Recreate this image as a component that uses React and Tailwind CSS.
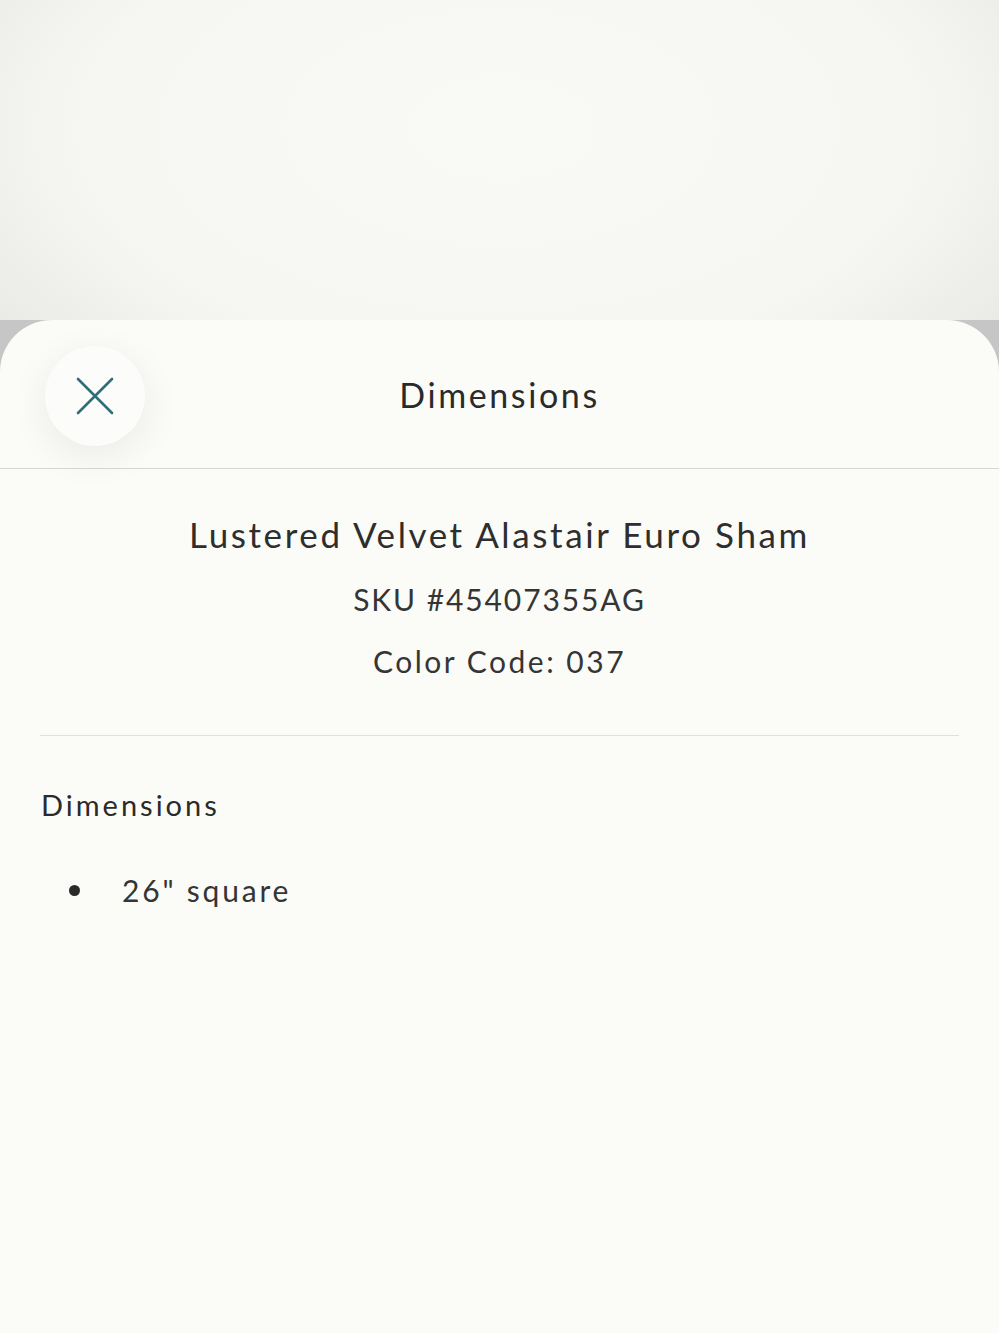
export default function App() {
  const font = { fontFamily: '"Lato", "Noto Sans", sans-serif' }

  return (
    <div className="w-[999px] h-[1333px] flex flex-col overflow-hidden" style={font}>
      {/* page behind the sheet */}
      <div className="h-[320px] bg-[radial-gradient(ellipse_70%_120%_at_50%_40%,#f9faf5_0%,#f6f7f2_60%,#e4e5e1_100%)]" />

      <div className="flex-1 bg-[#c6c6c6]">
        <div className="h-full bg-[#fbfcf8] rounded-t-[52px] flex flex-col">
          {/* header */}
          <div className="h-[149px] flex items-center relative border-b border-[#d6d6d2]">
            <button className="absolute left-[45px] top-[26px] w-[100px] h-[100px] rounded-full bg-[#fcfcfa] shadow-[0_10px_40px_rgba(0,0,0,0.07)] flex items-center justify-center">
              <svg width="40" height="40" viewBox="0 0 40 40" fill="none">
                <path d="M3 3L37 37M37 3L3 37" stroke="#2f6e78" strokeWidth="2.6" strokeLinecap="round" />
              </svg>
            </button>
            <div className="w-full text-center text-[34px] text-[#2a2a2a] tracking-[2.6px]">Dimensions</div>
          </div>

          {/* product */}
          <div className="mx-[40px] pt-[40px] pb-[52px] border-b border-[#e0e1dc] flex flex-col items-center text-[#2e2e2e]">
            <div className="text-[35px] tracking-[2.6px] leading-[50px]">Lustered Velvet Alastair Euro Sham</div>
            <div className="text-[30px] tracking-[1.9px] leading-[44px] mt-[18px] text-[#353535]">SKU #45407355AG</div>
            <div className="text-[30px] tracking-[2.5px] leading-[44px] mt-[18px] text-[#353535]">Color Code: 037</div>
          </div>

          {/* dimensions */}
          <div className="px-[41px] pt-[49px]">
            <div className="text-[29px] tracking-[3px] text-[#2a2a2a] leading-[40px]">Dimensions</div>
            <ul className="mt-[45px] flex flex-col">
              <li className="flex items-center">
                <span className="w-[11px] h-[11px] rounded-full bg-[#2a2a2a] ml-[28px]" />
                <span className="ml-[42px] text-[30px] tracking-[2.8px] text-[#353535] leading-[40px]">26" square</span>
              </li>
            </ul>
          </div>
        </div>
      </div>
    </div>
  )
}
